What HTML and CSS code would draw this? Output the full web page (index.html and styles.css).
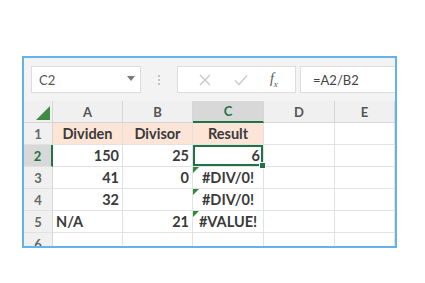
FILE: index.html
```html
<!DOCTYPE html>
<html lang="en">
<head>
  <meta charset="UTF-8" />
  <title>Divide by zero</title>
  <link rel="stylesheet" href="styles.css">
</head>
<body>

<div class="sheet">
  <!-- Formula bar -->
  <div class="toolbar">
    <div class="namebox">
      <span>C2</span>
      <svg class="caret" width="8" height="5" viewBox="0 0 8 5"><path d="M0 0h8L4 5z" fill="#7a7a7a"/></svg>
    </div>
    <div class="grip"><i></i><i></i><i></i></div>
    <div class="fxbox">
      <svg width="12" height="12" viewBox="0 0 12 12"><path d="M1 1l10 10M11 1L1 11" stroke="#c8c8c8" stroke-width="1.4"/></svg>
      <svg width="14" height="12" viewBox="0 0 14 12"><path d="M1 6.5l4 4L13 1.5" stroke="#c8c8c8" stroke-width="1.4" fill="none"/></svg>
      <span class="fx">f<sub>x</sub></span>
    </div>
    <div class="formula">=A2/B2</div>
  </div>

  <!-- Grid -->
  <div class="grid">
    <div class="corner"><svg width="14" height="14" viewBox="0 0 14 14"><path d="M14 0v14H0z" fill="#3f8a45"/></svg></div>
    <div class="colhead">A</div>
    <div class="colhead">B</div>
    <div class="colhead active">C</div>
    <div class="colhead">D</div>
    <div class="colhead">E</div>

    <div class="rowhead">1</div>
    <div class="cell head">Dividen</div>
    <div class="cell head">Divisor</div>
    <div class="cell head">Result</div>
    <div class="cell"></div>
    <div class="cell"></div>

    <div class="rowhead active">2</div>
    <div class="cell num">150</div>
    <div class="cell num">25</div>
    <div class="cell num selected">6<span class="handle"></span></div>
    <div class="cell"></div>
    <div class="cell"></div>

    <div class="rowhead">3</div>
    <div class="cell num">41</div>
    <div class="cell num">0</div>
    <div class="cell center error">#DIV/0!</div>
    <div class="cell"></div>
    <div class="cell"></div>

    <div class="rowhead">4</div>
    <div class="cell num">32</div>
    <div class="cell"></div>
    <div class="cell center error">#DIV/0!</div>
    <div class="cell"></div>
    <div class="cell"></div>

    <div class="rowhead">5</div>
    <div class="cell">N/A</div>
    <div class="cell num">21</div>
    <div class="cell center error">#VALUE!</div>
    <div class="cell"></div>
    <div class="cell"></div>

    <div class="rowhead">6</div>
    <div class="cell"></div>
    <div class="cell"></div>
    <div class="cell"></div>
    <div class="cell"></div>
    <div class="cell"></div>
  </div>
</div>

</body>
</html>
```
FILE: styles.css
```css
body {
  margin: 0;
  background: #fff;
  font-family: Lato, 'Liberation Sans', sans-serif;
  color: #3b3b3b;
}
.sheet {
  margin: 56px 0 0 22px;
  width: 375px;
  height: 192px;
  box-sizing: border-box;
  border: 2px solid #62b2ec;
  overflow: hidden;
  background: #fff;
}
.toolbar {
  display: flex;
  align-items: center;
  height: 43px;
  padding: 0 0 0 7px;
  background: #f3f3f3;
  box-sizing: border-box;
}
.namebox {
  display: flex;
  align-items: center;
  justify-content: space-between;
  width: 110px;
  height: 27px;
  box-sizing: border-box;
  padding: 0 5px 0 7px;
  background: #fff;
  border: 1px solid #dcdcdc;
  font-size: 13px;
  color: #555;
}
.caret {
  margin-bottom: 2px;
}
.grip {
  width: 36px;
  display: flex;
  flex-direction: column;
  align-items: center;
  gap: 2px;
}
.grip i {
  width: 2px;
  height: 2px;
  background: #c4c4c4;
}
.fxbox {
  display: flex;
  align-items: center;
  justify-content: space-around;
  width: 119px;
  height: 27px;
  box-sizing: border-box;
  padding: 0 6px 0 10px;
  background: #fff;
  border: 1px solid #dcdcdc;
}
.fx {
  font-family: 'Liberation Serif', serif;
  font-style: italic;
  font-size: 14px;
  color: #555;
}
.fx sub {
  font-size: 9px;
}
.formula {
  flex: 1;
  height: 27px;
  margin-left: 4px;
  box-sizing: border-box;
  padding: 0 0 0 12px;
  background: #fff;
  border: 1px solid #dcdcdc;
  border-right: 0;
  display: flex;
  align-items: center;
  font-size: 13px;
  color: #444;
}
.grid {
  display: grid;
  grid-template-columns: 29px 70px 70px 71px 71px 60px;
  grid-template-rows: 22px repeat(6, 22px);
}
.corner {
  background: #f0f0f0;
  border-right: 1px solid #d6d6d6;
  border-bottom: 1px solid #d6d6d6;
  display: flex;
  align-items: flex-end;
  justify-content: flex-end;
  padding: 0 2px 2px 0;
}
.colhead {
  background: #f0f0f0;
  border-right: 1px solid #d6d6d6;
  border-bottom: 1px solid #d6d6d6;
  display: flex;
  align-items: center;
  justify-content: center;
  font-size: 13px;
  font-weight: 700;
  color: #555;
}
.colhead.active {
  background: #d8d8d8;
  color: #217346;
  border-bottom: 2px solid #217346;
}
.rowhead {
  background: #f0f0f0;
  border-right: 1px solid #d6d6d6;
  border-bottom: 1px solid #e2e2e2;
  display: flex;
  align-items: center;
  justify-content: center;
  font-size: 13px;
  font-weight: 700;
  color: #666;
}
.rowhead.active {
  background: #d8d8d8;
  color: #217346;
  border-right: 2px solid #217346;
}
.cell {
  position: relative;
  border-right: 1px solid #e2e2e2;
  border-bottom: 1px solid #e2e2e2;
  display: flex;
  align-items: center;
  padding: 0 3px;
  font-size: 14.5px;
  font-weight: 700;
  color: #3a3a3a;
  white-space: nowrap;
}
.cell.head {
  background: #fce4d6;
  justify-content: center;
}
.num {
  justify-content: flex-end;
}
.center {
  justify-content: center;
}
.error::before {
  content: "";
  position: absolute;
  left: 0;
  top: 0;
  border-top: 6px solid #2e8b3a;
  border-right: 6px solid transparent;
}
.selected {
  box-shadow: inset 0 0 0 2px #217346;
}
.handle {
  position: absolute;
  right: -3px;
  bottom: -3px;
  width: 5px;
  height: 5px;
  background: #217346;
  border: 1px solid #fff;
  z-index: 1;
}
```
